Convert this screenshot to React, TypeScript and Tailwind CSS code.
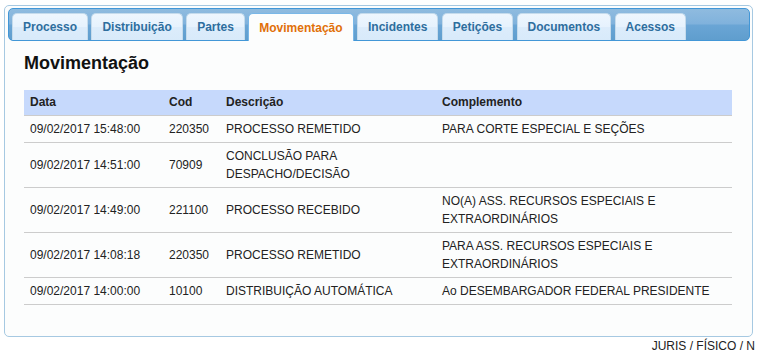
import React from "react";

const tabs = [
  "Processo",
  "Distribuição",
  "Partes",
  "Movimentação",
  "Incidentes",
  "Petições",
  "Documentos",
  "Acessos",
];

const rows = [
  ["09/02/2017 15:48:00", "220350", "PROCESSO REMETIDO", "PARA CORTE ESPECIAL E SEÇÕES"],
  ["09/02/2017 14:51:00", "70909", "CONCLUSÃO PARA DESPACHO/DECISÃO", ""],
  ["09/02/2017 14:49:00", "221100", "PROCESSO RECEBIDO", "NO(A) ASS. RECURSOS ESPECIAIS E EXTRAORDINÁRIOS"],
  ["09/02/2017 14:08:18", "220350", "PROCESSO REMETIDO", "PARA ASS. RECURSOS ESPECIAIS E EXTRAORDINÁRIOS"],
  ["09/02/2017 14:00:00", "10100", "DISTRIBUIÇÃO AUTOMÁTICA", "Ao DESEMBARGADOR FEDERAL PRESIDENTE"],
];

export default function App() {
  return (
    <div
      className="w-[760px] h-[354px] bg-white text-[#222] pt-[5px] pl-[4px] pr-[7px]"
      style={{ fontFamily: '"Liberation Sans", Arial, sans-serif' }}
    >
      <div className="h-[332px] rounded-[5px] border border-[#a6c9e2] bg-[#fcfdfd] pt-[2px] pl-[3px] pr-[2px]">
        <div className="h-[33px] rounded-[5px] border border-[#4297d7] bg-[linear-gradient(to_bottom,#8fbbdf_0%,#80b2dc_48%,#6aa5d5_52%,#5f9ece_100%)] flex items-end gap-[3.4px] pl-[3px]">
          {tabs.map((t) => {
            const active = t === "Movimentação";
            return (
              <div
                key={t}
                className={
                  active
                    ? "h-[28px] -mb-px px-[10px] flex items-center rounded-t-[5px] border border-b-0 border-[#79b7e7] bg-[#fcfdfd] text-[#e17009] text-[12px] font-bold"
                    : "h-[27px] px-[10px] flex items-center rounded-t-[5px] border border-b-0 border-[#c5dbec] bg-[linear-gradient(to_bottom,#eef6fe_0%,#e6f2fd_50%,#dcecfb_52%,#d8eafa_100%)] text-[#2e6e9e] text-[12px] font-bold"
                }
              >
                {t}
              </div>
            );
          })}
        </div>
        <div className="pl-[16px]">
          <h2 className="mt-[12px] text-[18px] leading-[21px] font-bold text-[#111]">Movimentação</h2>
          <table className="mt-[16px] w-[708px] table-fixed border-collapse text-[12px]">
            <colgroup>
              <col className="w-[139px]" />
              <col className="w-[57px]" />
              <col className="w-[216px]" />
              <col className="w-[296px]" />
            </colgroup>
            <thead>
              <tr className="bg-[#c6d9fc]">
                {["Data", "Cod", "Descrição", "Complemento"].map((h) => (
                  <th
                    key={h}
                    className="text-left font-bold px-[6px] py-[4px] leading-[17px] border-b border-[#cccccc] text-[#222]"
                  >
                    {h}
                  </th>
                ))}
              </tr>
            </thead>
            <tbody>
              {rows.map((r, i) => (
                <tr key={i}>
                  {r.map((c, j) => (
                    <td
                      key={j}
                      className="align-middle px-[6px] py-[4px] leading-[18px] border-b border-[#cccccc] text-[#222]"
                    >
                      {c}
                    </td>
                  ))}
                </tr>
              ))}
            </tbody>
          </table>
        </div>
      </div>
      <div className="mt-[1px] mr-[-2px] text-right text-[12px] leading-[16px] text-[#222]">JURIS / FÍSICO / N</div>
    </div>
  );
}
